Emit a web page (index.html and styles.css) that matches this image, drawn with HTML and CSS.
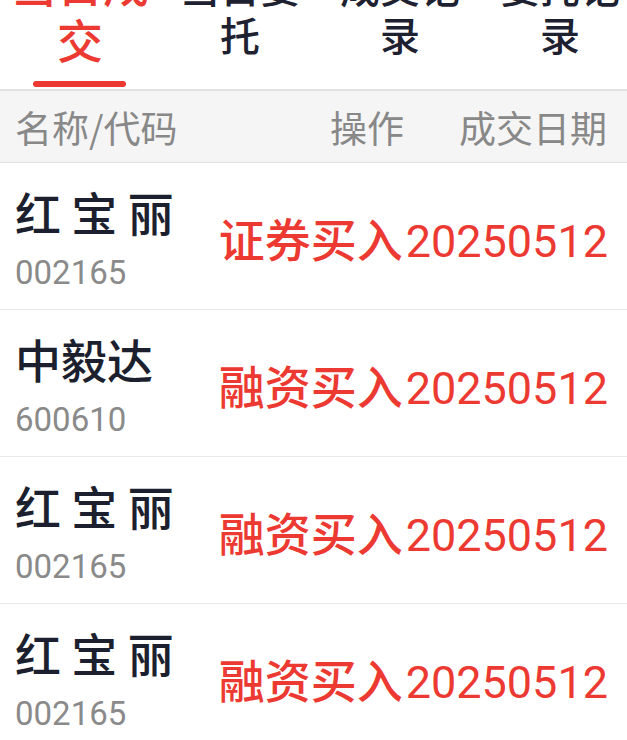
FILE: index.html
```html
<!DOCTYPE html>
<html lang="zh-CN">
<head>
<meta charset="utf-8">
<title>当日成交</title>
<link rel="stylesheet" href="styles.css">
</head>
<body>
<div class="page">
  <nav class="tabs">
    <div class="tab active"><span class="tab-label">当日成<br>交</span><i class="indicator"></i></div>
    <div class="tab"><span class="tab-label">当日委<br>托</span></div>
    <div class="tab"><span class="tab-label">成交记<br>录</span></div>
    <div class="tab"><span class="tab-label">委托记<br>录</span></div>
  </nav>
  <div class="thead">
    <span class="th-name">名称/代码</span>
    <span class="th-op">操作</span>
    <span class="th-date">成交日期</span>
  </div>
  <ul class="list">
    <li class="row">
      <div class="stock"><div class="name">红 宝 丽</div><div class="code">002165</div></div>
      <div class="deal"><span class="op">证券买入</span><span class="date">20250512</span></div>
    </li>
    <li class="row">
      <div class="stock"><div class="name">中毅达</div><div class="code">600610</div></div>
      <div class="deal"><span class="op">融资买入</span><span class="date">20250512</span></div>
    </li>
    <li class="row">
      <div class="stock"><div class="name">红 宝 丽</div><div class="code">002165</div></div>
      <div class="deal"><span class="op">融资买入</span><span class="date">20250512</span></div>
    </li>
    <li class="row">
      <div class="stock"><div class="name">红 宝 丽</div><div class="code">002165</div></div>
      <div class="deal"><span class="op">融资买入</span><span class="date">20250512</span></div>
    </li>
  </ul>
</div>
</body>
</html>
```
FILE: styles.css
```css
html, body {
  margin: 0;
  padding: 0;
  background: #ffffff;
}
body {
  width: 627px;
  height: 740px;
  overflow: hidden;
  font-family: Roboto, "Noto Sans CJK SC", sans-serif;
}
.page {
  width: 627px;
}
.tabs {
  display: flex;
  align-items: center;
  height: 159px;
  margin-top: -70px;
  overflow: hidden;
  font-family: "Noto Sans CJK SC", sans-serif;
  font-weight: 500;
}
.tab {
  position: relative;
  flex: 0 0 160px;
  height: 100%;
  display: flex;
  align-items: center;
  justify-content: center;
  text-align: center;
  color: #1e2130;
  font-size: 40px;
  line-height: 48px;
}
.tab.active {
  color: #ec3a32;
  font-size: 46px;
  line-height: 56px;
}
.indicator {
  position: absolute;
  left: 33px;
  bottom: 2px;
  width: 93px;
  height: 6px;
  border-radius: 3px;
  background: #ec3a32;
}
.thead {
  display: flex;
  align-items: center;
  height: 71px;
  padding: 0 20px 0 15px;
  border-top: 2px solid #e2e2e2;
  border-bottom: 1px solid #e2e2e2;
  background: #f5f5f5;
  color: #888888;
  font-family: "Noto Sans CJK SC", sans-serif;
  font-size: 37px;
  line-height: 44px;
}
.th-name {
  flex: 1;
}
.th-op {
  margin-right: 55px;
}
.list {
  list-style: none;
  margin: 0;
  padding: 0;
}
.row {
  display: flex;
  align-items: center;
  justify-content: space-between;
  height: 107px;
  padding: 23px 19px 16px 15px;
  border-bottom: 1px solid #e8e8e8;
}
.stock {
  display: flex;
  flex-direction: column;
}
.name {
  color: #1c1f2e;
  font-family: "Noto Sans CJK SC", sans-serif;
  font-size: 46px;
  font-weight: 500;
  line-height: 50px;
  white-space: pre;
}
.code {
  margin-top: 17px;
  color: #8a8a8a;
  font-family: Roboto, sans-serif;
  font-size: 33px;
  line-height: 40px;
}
.deal {
  display: flex;
  align-items: baseline;
  color: #ec3a32;
  line-height: 56px;
  white-space: nowrap;
}
.op {
  font-family: "Noto Sans CJK SC", sans-serif;
  font-size: 46px;
  font-weight: 500;
}
.date {
  margin-left: 3px;
  font-family: Roboto, sans-serif;
  font-size: 45px;
  font-weight: 400;
}
```
